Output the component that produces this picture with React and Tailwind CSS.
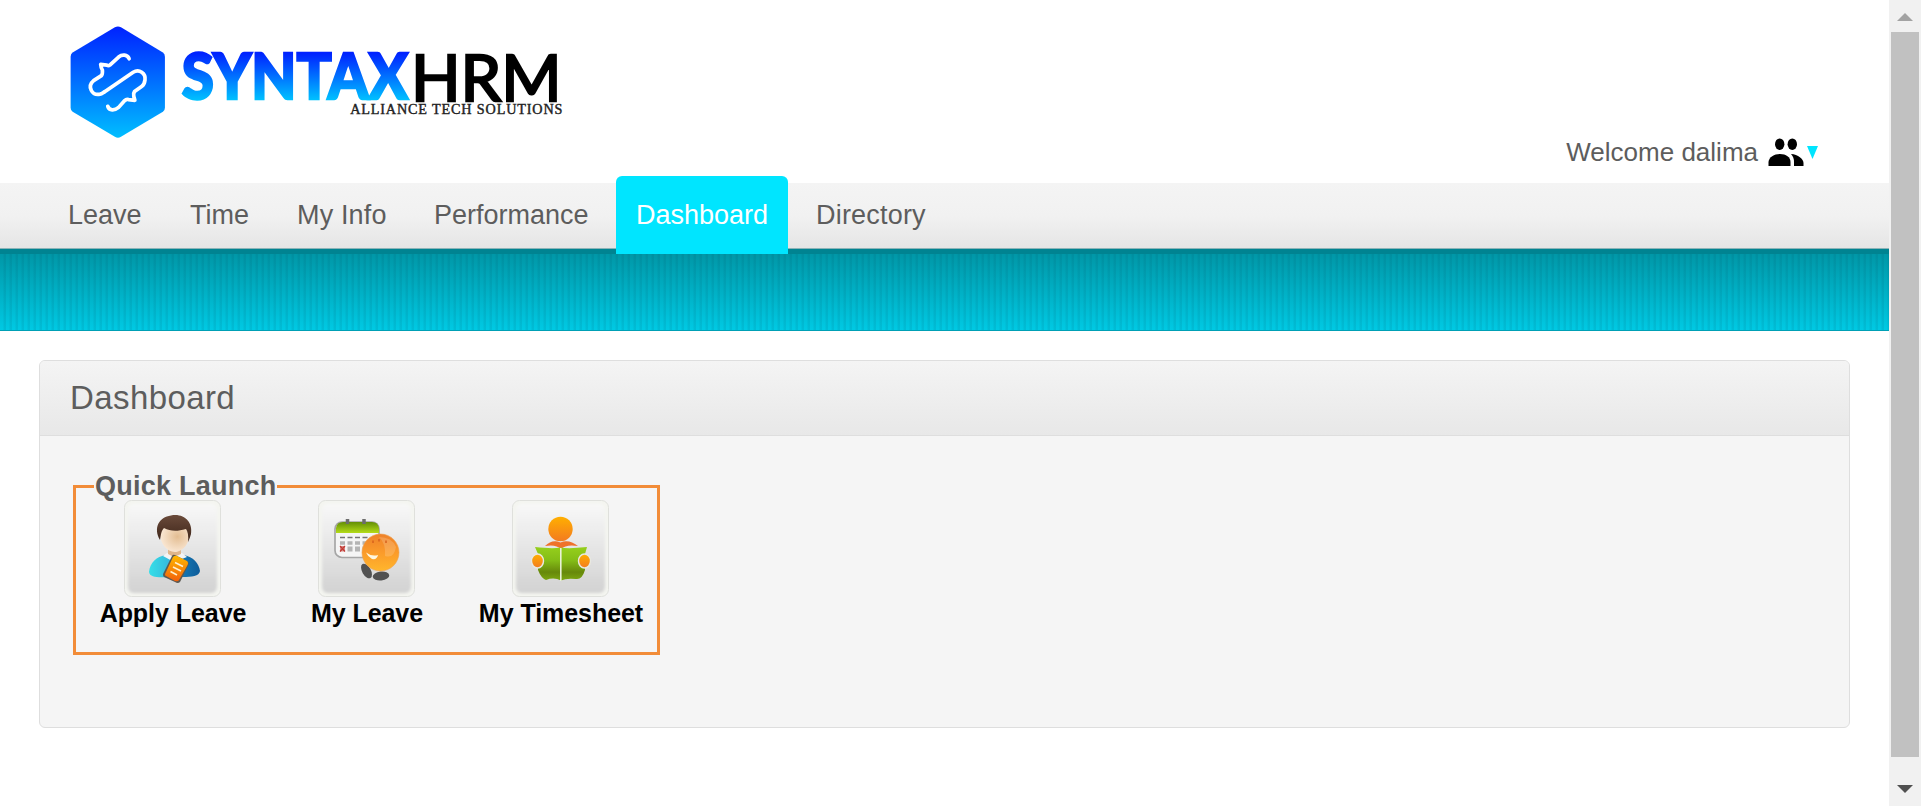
const NAV = [
  { label: 'Leave', box: 'w-[122px]' },
  { label: 'Time', box: 'w-[107px]' },
  { label: 'My Info', box: 'w-[137px]', text: 'tracking-[0.15px]' },
  { label: 'Performance', box: 'w-[202px]' },
  { label: 'Dashboard', box: 'w-[172px]', active: true },
  { label: 'Directory', box: 'w-[170px] ml-2', text: 'tracking-[0.2px]' },
];

function Logo() {
  return (
    <svg className="block h-[140px] w-[530px]" viewBox="0 0 1568 414" aria-label="SyntaxHRM">
      <defs>
        <linearGradient id="hex" x1="0" y1="0" x2="0" y2="1">
          <stop offset="0" stopColor="#0022ff" />
          <stop offset="1" stopColor="#00beff" />
        </linearGradient>
        <linearGradient id="word" gradientUnits="userSpaceOnUse" x1="0" y1="128" x2="0" y2="268">
          <stop offset="0" stopColor="#0022ff" />
          <stop offset="1" stopColor="#00c3ff" />
        </linearGradient>
      </defs>
      <path d="M192 51q9-4 18 0L334 126q6 5 6 12V289q0 8-6 12L210 375q-9 5-18 0L67 301q-6-4-6-12V138q0-7 6-12Z" fill="url(#hex)" />
      <path d="M234 144C229 131 213 131 203 139L177 163Q173 166 168 163L150 161Q151 173 155 178Q156 190 152 194L129 209C109 226 124 254 148 249C154 248 157 244 163 241L246 184C264 173 284 187 281 207C280 216 277 222 271 226L250 241Q246 246 248 256L251 267L232 265Q226 263 221 268L203 288C191 298 175 298 171 285" fill="none" stroke="#fff" strokeWidth="11" strokeLinecap="round" strokeLinejoin="round" />
      <text x="390" y="264" fontFamily="Lato" fontWeight="900" fontSize="184" textLength="670" lengthAdjust="spacingAndGlyphs" fill="url(#word)" stroke="url(#word)" strokeWidth="7">SYNTAX</text>
      <text x="1068" y="269" fontFamily="Lato" fontWeight="400" fontSize="190" textLength="446" lengthAdjust="spacingAndGlyphs" fill="#000" stroke="#000" strokeWidth="7">HRM</text>
      <text x="888" y="308" fontFamily="Liberation Serif" fontWeight="400" fontSize="42" textLength="628" lengthAdjust="spacing" fill="#222" stroke="#222" strokeWidth="1.2">ALLIANCE TECH SOLUTIONS</text>
    </svg>
  );
}

function Tile({ children }) {
  return (
    <svg className="block h-[97px] w-[97px]" viewBox="0 0 97 97">
      <defs>
        <linearGradient id="tile" x1="0" y1="0" x2="0" y2="1">
          <stop offset="0" stopColor="#f8f8f8" />
          <stop offset="1" stopColor="#d2d2d2" />
        </linearGradient>
        <filter id="soft" x="-10%" y="-10%" width="120%" height="120%"><feGaussianBlur stdDeviation="1.8" /></filter>
        <linearGradient id="hair" x1="0" y1="0" x2="0" y2="1"><stop offset="0" stopColor="#6a4a3a" /><stop offset="1" stopColor="#3c2418" /></linearGradient>
        <radialGradient id="face" cx=".6" cy=".45" r=".6"><stop offset="0" stopColor="#e3bd92" /><stop offset="1" stopColor="#fbe9d6" /></radialGradient>
        <linearGradient id="shirt" x1="0" y1="0" x2="1" y2="0"><stop offset="0" stopColor="#35dfe8" /><stop offset=".4" stopColor="#35b9dc" /><stop offset=".65" stopColor="#1578b4" /><stop offset="1" stopColor="#0e5b99" /></linearGradient>
        <linearGradient id="note" x1="0" y1="0" x2="0" y2="1"><stop offset="0" stopColor="#ffb800" /><stop offset="1" stopColor="#f2600b" /></linearGradient>
        <linearGradient id="cal" x1="0" y1="0" x2="0" y2="1"><stop offset="0" stopColor="#648f05" /><stop offset="1" stopColor="#b4dc18" /></linearGradient>
        <linearGradient id="ball" x1="0" y1="0" x2="0" y2="1"><stop offset="0" stopColor="#ee812a" /><stop offset=".5" stopColor="#fb9b2a" /><stop offset="1" stopColor="#ffb62c" /></linearGradient>
        <linearGradient id="orange" x1="0" y1="0" x2="0" y2="1"><stop offset="0" stopColor="#ffaf00" /><stop offset="1" stopColor="#f37b20" /></linearGradient>
        <linearGradient id="book" x1="0" y1="0" x2="0" y2="1"><stop offset="0" stopColor="#95cf1c" /><stop offset=".4" stopColor="#84bd17" /><stop offset=".75" stopColor="#67880b" /><stop offset="1" stopColor="#7ba711" /></linearGradient>
      </defs>
      <rect x=".5" y=".5" width="96" height="96" rx="7" fill="#f4f5f0" stroke="#dfe0dc" />
      <rect x="4" y="4" width="89" height="89" rx="6" fill="url(#tile)" filter="url(#soft)" />
      {children}
    </svg>
  );
}

function ApplyIcon() {
  return (
    <Tile>
      <path d="M25 72C26 62 33 57 41 55H60C69 57 75 63 76 71C75 78 63 77 50 77C38 77 26 79 25 72Z" fill="url(#shirt)" />
      <path d="M39 56L43 53H58L63 57L50 62Z" fill="#f3f4f5" />
      <path d="M44 48H57V54L50 57L44 54Z" fill="#dfb68c" />
      <path d="M36 32Q38 23 50 24Q64 23 65 34C66 45 57 52 51 52C43 52 36 43 36 34Z" fill="url(#face)" />
      <path d="M36 40C29 28 35 17 47 15.500C60 13 69 22 67 34Q66 38 64 42Q65 33 62 29C52 32 46 31 40 28C37 31 37 35 36 40Z" fill="url(#hair)" />
      <path d="M51 55L63 61Q66 63 64 66L56 82Q54 84 51 82L40 77Q38 75 40 72L48 56Q49 54 51 55Z" fill="#5c5a52" />
      <path d="M53 56L63 61Q65 63 63 66L55 80Q54 82 51 81L42 76Q40 75 42 72L49 57Q51 55 53 56Z" fill="url(#note)" />
      <path d="M51 62.500L59 66.500M49 67L57 71M46.500 71.500L53 75" stroke="#fff0cf" strokeWidth="1.600" />
    </Tile>
  );
}

function LeaveIcon() {
  return (
    <Tile>
      <rect x="17" y="22" width="44" height="35.500" rx="7" fill="#f5f5f5" stroke="#a6a6a6" strokeWidth="1.700" />
      <path d="M18 33V28Q19 22 25 22H54Q60 22 61 28V33Z" fill="url(#cal)" />
      <path d="M29.500 19V24M46 19V24" stroke="#6d6d6d" strokeWidth="3.500" />
      <path d="M22 37.500H50" stroke="#747474" strokeWidth="1.700" strokeDasharray="5 2.500" />
      <path d="M22 43H50" stroke="#b4b4b4" strokeWidth="3.500" strokeDasharray="5 2.500" />
      <path d="M29.500 49H50" stroke="#b4b4b4" strokeWidth="5" strokeDasharray="5 2.500" />
      <rect x="22" y="46" width="5" height="5.500" fill="#d98a83" />
      <path d="M22 46L27 51.500M27 46L22 51.500" stroke="#c03a35" strokeWidth="1.200" />
      <ellipse cx="48.500" cy="71" rx="4.300" ry="8" transform="rotate(-30 48.500 71)" fill="#515151" />
      <ellipse cx="63" cy="76" rx="8.300" ry="4.500" transform="rotate(-6 63 76)" fill="#515151" />
      <circle cx="62.500" cy="52.500" r="18.500" fill="url(#ball)" stroke="#eea04b" strokeWidth=".6" />
      <path d="M61 37Q74 37 78 47Q76 59 67 56Q68 43 61 37Z" fill="#fff" opacity=".17" />
      <path d="M48 52.500Q54 57 60 55Q59 60 54 59Q50 57 48 52.500Z" fill="#fff7df" />
      <path d="M55 40.500V43M61 39V41.500M68 40.500V43" stroke="#d8621c" strokeWidth="1.500" />
    </Tile>
  );
}

function TimesheetIcon() {
  return (
    <Tile>
      <circle cx="48.500" cy="29" r="12.200" fill="url(#orange)" />
      <path d="M33 46Q40 39 48.500 42.500Q57 39 66 46Q54 44 49 49Q44 44 33 46Z" fill="#ef722a" />
      <path d="M23 47Q41 49 48 47.500Q57 49 75 47L73 54V70Q70 80 64 79Q54 78 49 80.500Q42 77 34 80Q29 78 26 70V54Z" fill="url(#book)" />
      <path d="M48.800 48V81" stroke="#e9f1d8" strokeWidth="1.600" />
      <ellipse cx="25.500" cy="61" rx="6" ry="7" fill="url(#orange)" stroke="#e8e9e2" strokeWidth="1.400" />
      <ellipse cx="72.500" cy="61" rx="6" ry="7" fill="url(#orange)" stroke="#e8e9e2" strokeWidth="1.400" />
    </Tile>
  );
}

function Launch({ label, icon, box }) {
  return (
    <a className={'flex flex-col items-center ' + box}>
      {icon}
      <span className="mt-[2px] whitespace-nowrap pl-px text-[25px] font-bold leading-[29px] tracking-[-0.05px] text-black">{label}</span>
    </a>
  );
}

export default function App() {
  return (
    <div className="flex h-[806px] w-[1921px] overflow-hidden bg-white font-['Liberation_Sans',Arial,sans-serif] text-[#5d5d5d]">
      <main className="flex w-[1889px] flex-col">
        <header className="flex h-[183px] justify-between pl-[50px] pr-[71px] pt-[10px]">
          <Logo />
          <div className="mb-[11px] flex h-[40px] items-center self-end">
            <span className="text-[26px] leading-[30px]">Welcome dalima</span>
            <svg className="ml-[10px] h-[30px] w-[36px]" viewBox="0 0 36 30" fill="#000">
              <ellipse cx="11.700" cy="7.200" rx="4.700" ry="5.800" />
              <ellipse cx="24.300" cy="7.200" rx="4.700" ry="5.800" />
              <path d="M.5 29V25C1 20 6 17 12 17C18 17 22.500 20 22.500 25V29Z" />
              <path d="M23 17C30 17.500 35.500 22 35.500 26V29H26V25Q26 20 23 17Z" />
            </svg>
            <svg className="ml-[3px] h-[13px] w-[11px]" viewBox="0 0 11 13"><path d="M0 0H11L5.500 13Z" fill="#00e5ff" /></svg>
          </div>
        </header>

        <nav className="flex h-[71px] items-end border-b-[5px] border-[#008391] bg-linear-to-b from-[#f4f4f4] via-[#f1f1f1] to-[#e5e5e5] bg-clip-padding pl-[48px] shadow-[inset_0_-1px_0_#8cb4b8]">
          {NAV.map((n) => (
            <a
              key={n.label}
              className={
                'flex shrink-0 whitespace-nowrap pl-5 text-[27px] leading-[31px] ' + n.box + ' ' + (n.text || '') +
                (n.active ? ' -mb-[5px] h-[78px] rounded-t-[6px] bg-[#00e5ff] pt-[24px] text-white' : ' h-[66px] pt-[17px]')
              }
            >
              {n.label}
            </a>
          ))}
        </nav>

        <div className="h-[77px] border-b border-[#00a0b5] bg-[repeating-linear-gradient(90deg,rgba(0,60,80,0)_0px,rgba(0,60,80,0)_3px,rgba(0,60,80,0.09)_4px,rgba(0,60,80,0.09)_6px),linear-gradient(#0097a7,#00c9e3)]" />

        <section className="ml-[39px] mt-[29px] flex h-[368px] w-[1811px] flex-col overflow-hidden rounded-[6px] border border-[#dedede] bg-[#f5f5f5]">
          <h1 className="h-[75px] border-b border-[#dedede] bg-linear-to-b from-[#f4f4f4] to-[#e8e8e8] pl-[30px] pt-[18px] text-[33px] leading-[37px] tracking-[0.4px]">Dashboard</h1>
          <fieldset className="ml-[33px] mt-[33px] h-[186px] w-[587px] border-[3px] border-[#f28c38] pl-[18px]">
            <legend className="h-[34px] pl-px text-[27px] font-bold leading-[34px] tracking-[0.25px]">Quick Launch</legend>
            <div className="-mt-[3px] flex">
              <Launch label="Apply Leave" icon={<ApplyIcon />} box="w-[157px]" />
              <Launch label="My Leave" icon={<LeaveIcon />} box="ml-[37px] w-[157px]" />
              <Launch label="My Timesheet" icon={<TimesheetIcon />} box="ml-[29px] w-[173px]" />
            </div>
          </fieldset>
        </section>
      </main>

      <aside className="flex w-[32px] flex-col items-center bg-[#f1f1f1]">
        <svg className="h-[32px] w-[32px]" viewBox="0 0 32 32"><path d="M8 21L16 13L24 21Z" fill="#a3a3a3" /></svg>
        <div className="h-[725px] w-[28px] bg-[#c1c1c1]" />
        <svg className="mt-[17px] h-[32px] w-[32px]" viewBox="0 0 32 32"><path d="M8 11L16 19L24 11Z" fill="#505050" /></svg>
      </aside>
    </div>
  );
}
